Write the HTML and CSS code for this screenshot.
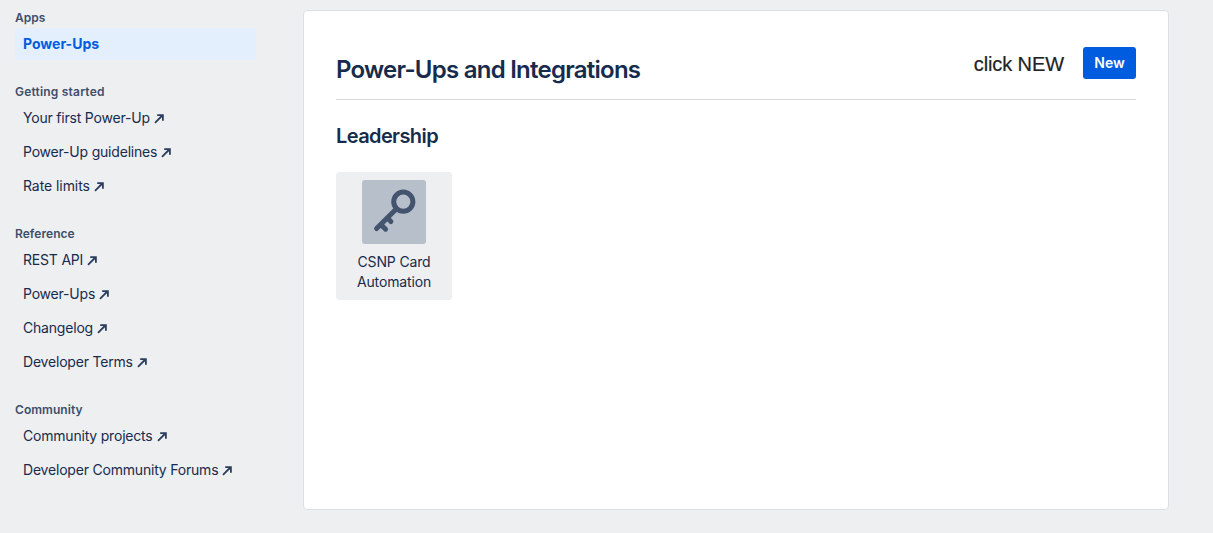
FILE: index.html
```html
<!DOCTYPE html>
<html lang="en">
<head>
<meta charset="utf-8">
<title>Power-Ups and Integrations</title>
<link rel="stylesheet" href="styles.css">
</head>
<body>
<svg class="defs" width="0" height="0" aria-hidden="true">
  <symbol id="ext" viewBox="0 0 11 11"><path d="M1 9.8 7.8 3" fill="none" stroke="currentColor" stroke-width="1.8"/><path d="M3.2 1.2H9.8V7.8H8V4.6L6.4 3H3.2Z" fill="currentColor"/></symbol>
</svg>
<div class="page">
  <nav class="sidebar">
    <section class="group">
      <h3 class="group-title">Apps</h3>
      <a class="link active"><span class="label">Power-Ups</span></a>
    </section>
    <section class="group">
      <h3 class="group-title started">Getting started</h3>
      <a class="link"><span class="label">Your first Power-Up</span><svg class="ext"><use href="#ext"/></svg></a>
      <a class="link"><span class="label">Power-Up guidelines</span><svg class="ext"><use href="#ext"/></svg></a>
      <a class="link short"><span class="label">Rate limits</span><svg class="ext"><use href="#ext"/></svg></a>
    </section>
    <section class="group">
      <h3 class="group-title">Reference</h3>
      <a class="link"><span class="label">REST API</span><svg class="ext"><use href="#ext"/></svg></a>
      <a class="link"><span class="label">Power-Ups</span><svg class="ext"><use href="#ext"/></svg></a>
      <a class="link"><span class="label">Changelog</span><svg class="ext"><use href="#ext"/></svg></a>
      <a class="link"><span class="label">Developer Terms</span><svg class="ext"><use href="#ext"/></svg></a>
    </section>
    <section class="group">
      <h3 class="group-title">Community</h3>
      <a class="link"><span class="label">Community projects</span><svg class="ext"><use href="#ext"/></svg></a>
      <a class="link"><span class="label">Developer Community Forums</span><svg class="ext"><use href="#ext"/></svg></a>
    </section>
  </nav>
  <main class="panel">
    <header class="panel-head">
      <h1 class="title">Power-Ups and Integrations</h1>
      <span class="note">click NEW</span>
      <button class="new">New</button>
    </header>
    <h2 class="workspace">Leadership</h2>
    <a class="card">
      <svg class="key" viewBox="0 0 64 64">
        <g fill="none" stroke="#44546f" stroke-width="5" stroke-linecap="round" stroke-linejoin="round">
          <circle cx="41.3" cy="21.7" r="9.6"/>
          <path d="M34.5 28.7 14.6 48.6M18.8 44.4 23.6 49.2M25.3 37.9 28.9 41.5"/>
        </g>
      </svg>
      <span class="card-name">CSNP Card<br>Automation</span>
    </a>
  </main>
</div>
</body>
</html>
```
FILE: styles.css
```css
* { box-sizing: border-box; }
body {
  margin: 0;
  background: #eeeff1;
  color: #172b4d;
  font: 14px/20px Inter, sans-serif;
}
.defs { position: absolute; }
.page {
  display: flex;
  height: 533px;
  padding: 8px 0 0 15px;
}
.sidebar {
  width: 241px;
  margin-right: 47px;
  display: flex;
  flex-direction: column;
  gap: 22px;
}
.group {
  display: flex;
  flex-direction: column;
  gap: 2px;
}
.group-title {
  margin: 0 0 -2px;
  font-size: 12px;
  line-height: 20px;
  font-weight: 600;
  letter-spacing: 0.05px;
  color: #3d4e6a;
}
.started { letter-spacing: 0.2px; }
.link {
  display: flex;
  align-items: center;
  height: 32px;
  padding: 0 8px;
  border-radius: 3px;
  letter-spacing: -0.2px;
  white-space: nowrap;
}
.short { letter-spacing: -0.07px; }
.active {
  background: #e3effd;
  color: #005ce0;
  font-weight: 700;
  letter-spacing: 0;
}
.ext {
  width: 11px;
  height: 11px;
  margin: 1px 0 0 4px;
  color: #2c3e5d;
}
.panel {
  width: 866px;
  height: 500px;
  margin-top: 2px;
  padding: 36px 32px 0;
  background: #fff;
  border: 1px solid #dcdfe4;
  border-radius: 4px;
}
.panel-head {
  display: flex;
  height: 53px;
  border-bottom: 1px solid #d9dbdf;
}
.title {
  flex: 1;
  margin: 9px 0 0;
  font-size: 24px;
  line-height: 28px;
  font-weight: 600;
  letter-spacing: -0.75px;
  white-space: nowrap;
}
.note {
  margin: 6px 19px 0 0;
  color: #222;
  font: 20px/23px "Liberation Sans", Arial, sans-serif;
  letter-spacing: -0.1px;
  -webkit-text-stroke: 0.2px #222;
}
.new {
  width: 53px;
  height: 32px;
  padding: 0;
  border: 0;
  border-radius: 3px;
  background: #005cdf;
  color: #fff;
  font: 600 14px/32px Inter, sans-serif;
}
.workspace {
  margin: 24px 0;
  font-size: 20px;
  line-height: 24px;
  font-weight: 600;
  letter-spacing: -0.6px;
}
.card {
  display: flex;
  flex-direction: column;
  align-items: center;
  width: 116px;
  height: 128px;
  padding-top: 8px;
  border-radius: 3px;
  background: #eeeff1;
}
.key {
  width: 64px;
  height: 64px;
  margin-bottom: 8px;
  border-radius: 3px;
  background: #b7c0ca;
}
.card-name {
  text-align: center;
  letter-spacing: -0.15px;
}
```
